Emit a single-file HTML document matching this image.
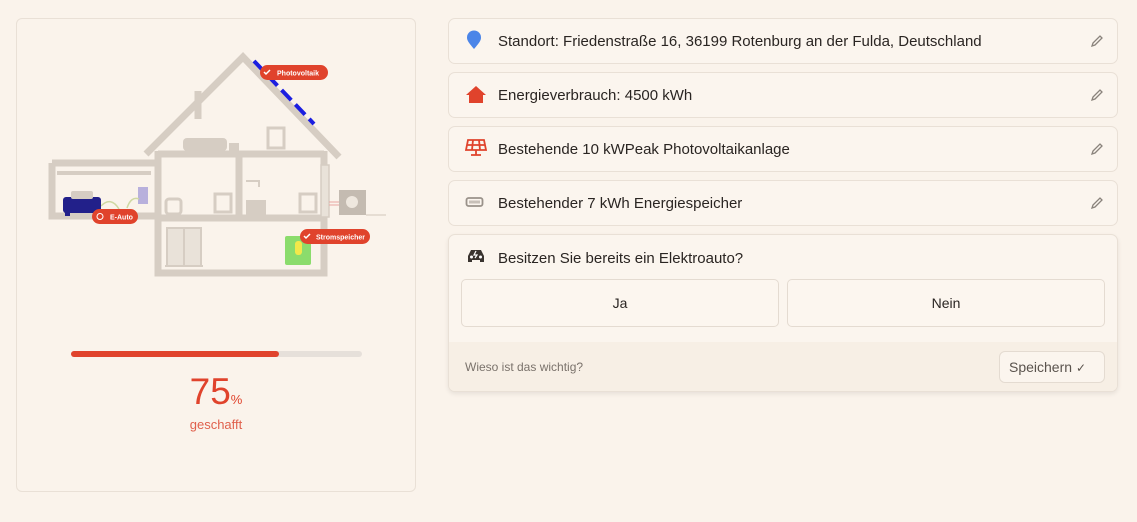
<!DOCTYPE html>
<html><head><meta charset="utf-8"><style>
*{box-sizing:border-box;margin:0;padding:0}
body{width:1137px;height:522px;background:#faf3eb;font-family:"Liberation Sans",sans-serif;position:relative;overflow:hidden;color:#2a2522}
.left{position:absolute;left:16px;top:18px;width:400px;height:474px;border:1px solid #e9e0d6;border-radius:6px}
.card{position:absolute;left:448px;width:670px;height:46px;border:1px solid #e9e0d6;border-radius:7px;background:#fbf5ee}
.card .t{position:absolute;left:49px;top:14px;font-size:15px}
.card .ic{position:absolute;left:16px;top:11px}
.card .pen{position:absolute;right:12px;top:14px}
.q{position:absolute;left:448px;top:234px;width:670px;height:158px;border:1px solid #e9e0d6;border-radius:7px;background:#fbf5ee;box-shadow:0 2px 5px rgba(0,0,0,.08);overflow:hidden}
.btn{position:absolute;top:44px;width:318px;height:48px;border:1px solid #e4dbd1;border-radius:5px;background:#fcf6ef;text-align:center;line-height:46px;font-size:14px}
.foot{position:absolute;left:0;top:107px;width:100%;height:51px;background:#f7efe5}
</style></head><body>
<div class="left">
<svg width="400" height="300" style="position:absolute;left:-16px;top:-18px" viewBox="0 0 400 300">
<g fill="none" stroke="#d6cdc3" stroke-width="7">
<path d="M145 153 L242 56 L338 156"/>
<path d="M157 150 V272 H323 V150"/>
<path d="M157 153 H323 M157 217 H323"/>
<path d="M238 153 V217"/>
<path d="M51 162 V215 H155 M51 162 H155"/>
<path d="M197 118 V90" stroke-width="7"/>
</g>
<path d="M56 172 H150" stroke="#d6cdc3" stroke-width="4"/>
<rect x="320" y="164" width="8" height="52" fill="#e9e2d9" stroke="#d6cdc3" stroke-width="1.5"/>
<rect x="182" y="137" width="44" height="13" rx="4" fill="#d6cdc3"/>
<rect x="228" y="142" width="10" height="8" fill="#d6cdc3"/>
<rect x="267" y="127" width="16" height="20" fill="none" stroke="#d6cdc3" stroke-width="3"/>
<rect x="214" y="193" width="16" height="18" fill="none" stroke="#d6cdc3" stroke-width="3"/>
<rect x="299" y="193" width="16" height="18" fill="none" stroke="#d6cdc3" stroke-width="3"/>
<rect x="245" y="199" width="20" height="18" fill="#d6cdc3"/>
<path d="M245 180 H258 V186" stroke="#d6cdc3" stroke-width="2" fill="none"/>
<rect x="165" y="198" width="15" height="15" rx="3" fill="none" stroke="#d6cdc3" stroke-width="3"/>
<rect x="166" y="227" width="34" height="38" fill="#e9e2d9" stroke="#d6cdc3" stroke-width="2"/>
<path d="M183 227 V265 M164 265 H202" stroke="#d6cdc3" stroke-width="2"/>
<rect x="338" y="189" width="27" height="25" fill="#c4bbb1"/>
<circle cx="351" cy="201" r="6" fill="#eee7de"/>
<path d="M328 201 H338 M328 204 H338" stroke="#e8a6a0" stroke-width="1"/>
<path d="M365 214 H385" stroke="#e6ddd3" stroke-width="2"/>
<path d="M253 60 L313 123" stroke="#1b1ee0" stroke-width="4" stroke-dasharray="14 6"/>
<rect x="284" y="235" width="26" height="29" rx="2" fill="#8bdc6c"/>
<rect x="294" y="240" width="7" height="14" rx="3" fill="#f2e84a"/>
<rect x="137" y="186" width="10" height="17" fill="#b8b0dc"/>
<path d="M100 205 Q110 195 118 208 M126 207 Q130 195 138 198" fill="none" stroke="#cfd8a2" stroke-width="1.5"/>
<rect x="62" y="196" width="38" height="16" rx="3" fill="#22208a"/>
<rect x="70" y="190" width="22" height="8" rx="2" fill="#d6cdc3"/>
<rect x="64" y="211" width="5" height="4" fill="#22208a"/><rect x="92" y="211" width="5" height="4" fill="#22208a"/>
<g font-family="Liberation Sans" font-weight="bold" font-size="7" fill="#fff">
<rect x="259" y="64" width="68" height="15" rx="7.5" fill="#e0432c"/><text x="276" y="74.5">Photovoltaik</text>
<path d="M263 71 l2 2 4 -4" stroke="#fff" stroke-width="1.5" fill="none"/>
<rect x="91" y="208" width="46" height="15" rx="7.5" fill="#e0432c"/><text x="109" y="218.5">E-Auto</text>
<circle cx="99" cy="215.5" r="3" stroke="#fff" fill="none"/>
<rect x="299" y="228" width="70" height="15" rx="7.5" fill="#e0432c"/><text x="315" y="238.5">Stromspeicher</text>
<path d="M303 235 l2 2 4 -4" stroke="#fff" stroke-width="1.5" fill="none"/>
</g>
</svg>
<div style="position:absolute;left:54px;top:332px;width:291px;height:6px;border-radius:3px;background:#e6e0da"></div>
<div style="position:absolute;left:54px;top:332px;width:208px;height:6px;border-radius:3px;background:#e0432c"></div>
<div style="position:absolute;left:0;width:100%;top:352px;text-align:center;color:#e0432c;font-size:37px">75<span style="font-size:13px">%</span></div>
<div style="position:absolute;left:0;width:100%;top:398px;text-align:center;color:#e0604c;font-size:13px">geschafft</div>
</div>

<div class="card" style="top:18px"><svg class="ic" width="18" height="22" viewBox="0 0 18 22"><path d="M9 19 C3 12 2 10 2 7.5 A7 7 0 0 1 16 7.5 C16 10 15 12 9 19Z" fill="#4b85e8"/></svg><div class="t">Standort: Friedenstraße 16, 36199 Rotenburg an der Fulda, Deutschland</div><svg class="pen" width="16" height="16"><path d="M3 13 L4 10 L11 3 L13 5 L6 12Z" fill="none" stroke="#8a837c" stroke-width="1.3"/></svg></div>
<div class="card" style="top:72px"><svg class="ic" width="22" height="22" viewBox="0 0 22 22"><path d="M11 2 L21 11 H18 V19 H4 V11 H1Z" fill="#e0432c"/></svg><div class="t">Energieverbrauch: 4500 kWh</div><svg class="pen" width="16" height="16"><path d="M3 13 L4 10 L11 3 L13 5 L6 12Z" fill="none" stroke="#8a837c" stroke-width="1.3"/></svg></div>
<div class="card" style="top:126px"><svg class="ic" width="22" height="20" viewBox="0 0 22 20"><path d="M3 2 H19 L21 12 H1Z M2 7 H20 M8 2 L7 12 M14 2 L15 12 M11 12 V17 M6 17 H16" fill="none" stroke="#e0432c" stroke-width="1.8"/></svg><div class="t">Bestehende 10 kWPeak Photovoltaikanlage</div><svg class="pen" width="16" height="16"><path d="M3 13 L4 10 L11 3 L13 5 L6 12Z" fill="none" stroke="#8a837c" stroke-width="1.3"/></svg></div>
<div class="card" style="top:180px"><svg class="ic" width="20" height="20" viewBox="0 0 20 20"><rect x="1.5" y="6" width="16" height="8" rx="2" fill="none" stroke="#9a928a" stroke-width="1.8"/><rect x="4" y="8.5" width="11" height="3" fill="#c8c0b8"/></svg><div class="t">Bestehender 7 kWh Energiespeicher</div><svg class="pen" width="16" height="16"><path d="M3 13 L4 10 L11 3 L13 5 L6 12Z" fill="none" stroke="#8a837c" stroke-width="1.3"/></svg></div>
<div class="q">
<svg style="position:absolute;left:17px;top:12px" width="20" height="18" viewBox="0 0 20 18"><path d="M2 15 V9 L5 3 H15 L18 9 V15 H14 V13 H6 V15Z" fill="#3a3430"/><circle cx="5.5" cy="10" r="1.5" fill="#fff"/><circle cx="14.5" cy="10" r="1.5" fill="#fff"/><path d="M10 4 L8 8 H11 L9 11" stroke="#fff" stroke-width="1.2" fill="none"/></svg>
<div style="position:absolute;left:49px;top:15px;font-size:15px">Besitzen Sie bereits ein Elektroauto?</div>
<div class="btn" style="left:12px">Ja</div>
<div class="btn" style="left:338px">Nein</div>
<div class="foot">
<div style="position:absolute;left:16px;top:18px;font-size:12px;color:#7a726b">Wieso ist das wichtig?</div>
<div style="position:absolute;right:12px;top:9px;width:106px;height:32px;border:1px solid #e4dbd1;border-radius:6px;background:#fbf5ee;font-size:14px;color:#5a534d;line-height:30px;padding-left:9px">Speichern <span style="font-size:12px">✓</span></div>
</div>
</div>
</body></html>
